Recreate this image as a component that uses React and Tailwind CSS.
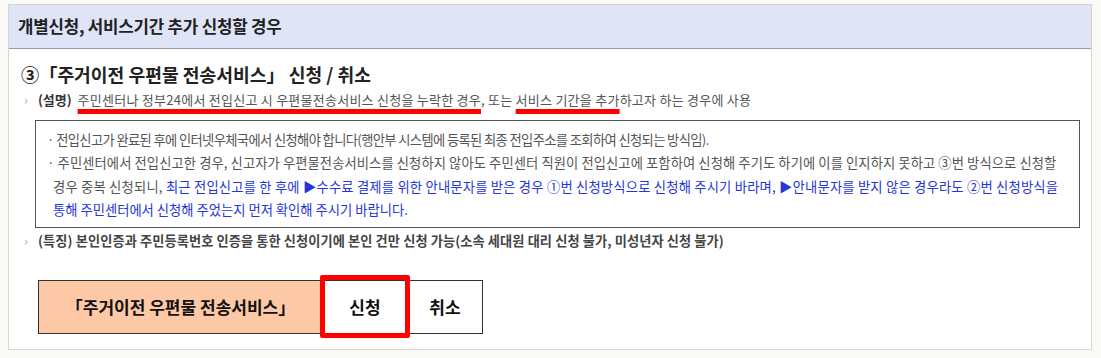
const FONT = { fontFamily: '"Noto Sans CJK KR", "Noto Sans", sans-serif' };

const Chevron = () => <span className="mr-[10px] text-[#e0a47a] font-normal">›</span>;

const RedMark = ({ children }) => (
  <span className="underline decoration-[#ff0000] decoration-[5px] underline-offset-[4px] [text-decoration-skip-ink:none]">
    {children}
  </span>
);

const App = () => {
  return (
    <div className="w-[1101px] h-[358px] bg-[#fafaf6] pt-[4px] pl-[8px]" style={FONT}>
      <div className="w-[1084px] h-[346px] border border-[#d6d6d6] bg-white">
        {/* header band */}
        <div className="h-[44px] bg-[#dfe5f7] border-b border-[#9b9b9b] flex items-center pl-[9px]">
          <h2 className="text-[16.8px] font-bold text-[#222] tracking-[-0.2px]">개별신청, 서비스기간 추가 신청할 경우</h2>
        </div>

        <div className="px-[12px]">
          <h3 className="mt-[13px] text-[18.2px] leading-[24px] font-bold text-[#222]">
            ③「주거이전 우편물 전송서비스」 신청 / 취소
          </h3>

          <p className="mt-[4px] pl-[3px] text-[13px] leading-[20px] text-[#555] whitespace-nowrap">
            <Chevron />
            <span className="font-bold text-[#333] mr-[3px]">(설명)</span>{' '}
            <span className="tracking-[0.25px]">
              <RedMark>주민센터나 정부24에서 전입신고 시 우편물전송서비스 신청을 누락한 경우</RedMark>, 또는{' '}
              <RedMark>서비스 기간을 추가</RedMark>하고자 하는 경우에 사용
            </span>
          </p>

          {/* notice box */}
          <div className="mt-[10px] ml-[14px] w-[1045px] border border-[#555] pt-[7px] pb-[5px] text-[13.3px] leading-[23.4px] text-[#555] whitespace-nowrap">
            <div className="pl-[11px] tracking-[-0.65px]">· 전입신고가 완료된 후에 인터넷우체국에서 신청해야 합니다(행안부 시스템에 등록된 최종 전입주소를 조회하여 신청되는 방식임).</div>
            <div className="pl-[11px] tracking-[0.08px]">· 주민센터에서 전입신고한 경우, 신고자가 우편물전송서비스를 신청하지 않아도 주민센터 직원이 전입신고에 포함하여 신청해 주기도 하기에 이를 인지하지 못하고 ③번 방식으로 신청할</div>
            <div className="pl-[17px] tracking-[0.2px]">
              경우 중복 신청되니,{' '}
              <span className="text-[#2536d8]">최근 전입신고를 한 후에 ▶수수료 결제를 위한 안내문자를 받은 경우 ①번 신청방식으로 신청해 주시기 바라며, ▶안내문자를 받지 않은 경우라도 ②번 신청방식을</span>
            </div>
            <div className="pl-[17px] text-[#2536d8]">통해 주민센터에서 신청해 주었는지 먼저 확인해 주시기 바랍니다.</div>
          </div>

          <p className="mt-[3px] pl-[3px] text-[13.2px] leading-[20px] font-semibold text-[#444] whitespace-nowrap">
            <Chevron />
            <span className="tracking-[0.1px]">(특징) 본인인증과 주민등록번호 인증을 통한 신청이기에 본인 건만 신청 가능(소속 세대원 대리 신청 불가, 미성년자 신청 불가)</span>
          </p>

          {/* buttons */}
          <div className="mt-[29px] ml-[17px] flex h-[54px] text-[17px] font-bold text-[#111]">
            <div className="w-[285px] bg-[#fdc8a6] border border-[#333] flex items-center justify-center">
              「주거이전 우편물 전송서비스」
            </div>
            <div className="relative w-[84px] border-y border-[#333] flex items-center justify-center bg-white">
              신청
              <span className="absolute -left-[3px] -right-[3px] -top-[6px] -bottom-[5px] border-[5px] border-[#ff0000] rounded-[2px]" />
            </div>
            <div className="w-[76px] border border-[#333] flex items-center justify-center bg-white">
              취소
            </div>
          </div>
        </div>
      </div>
    </div>
  );
};

export default App;
